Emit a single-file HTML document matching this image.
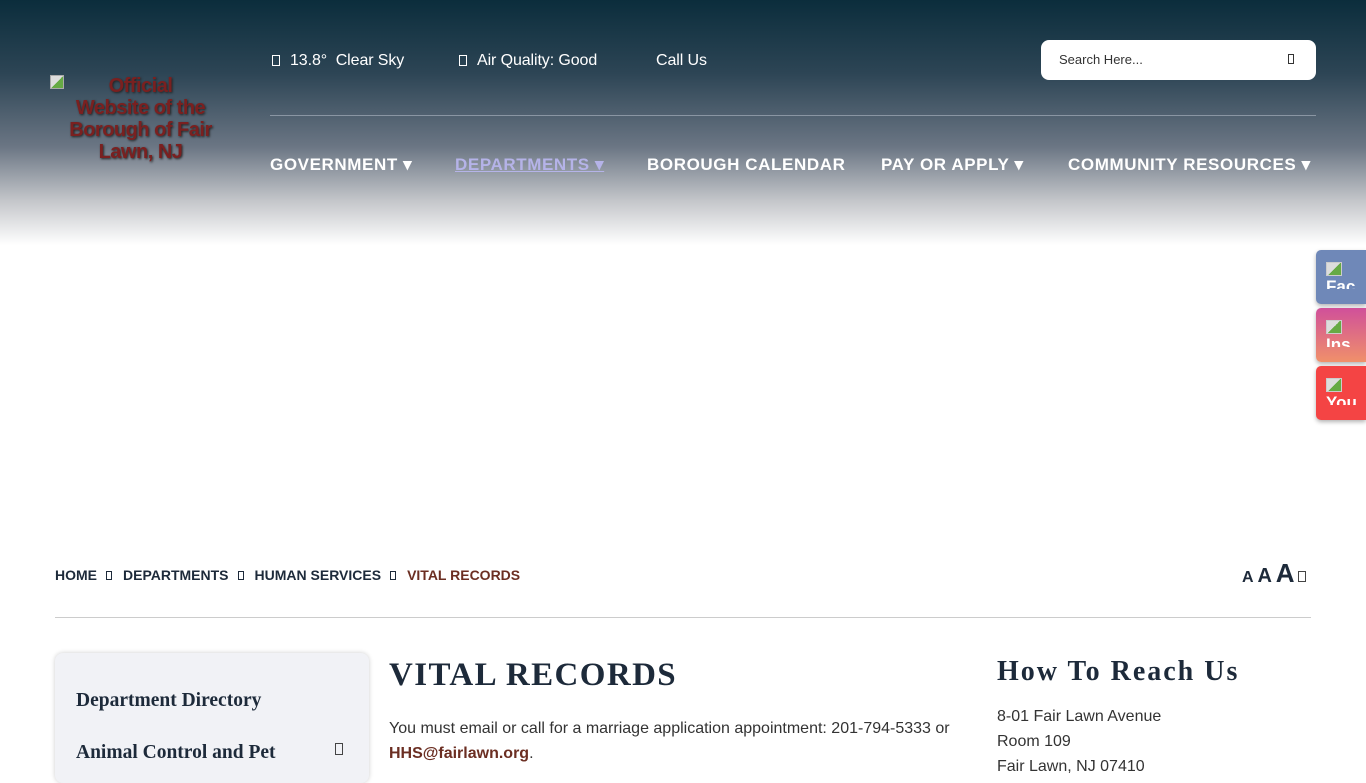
<!DOCTYPE html>
<html><head><meta charset="utf-8"><style>
*{margin:0;padding:0;box-sizing:border-box}
body{width:1366px;height:768px;overflow:hidden;background:#fff;font-family:"Liberation Sans",sans-serif;position:relative}
.hdr{position:absolute;left:0;top:0;width:1366px;height:245px;background:linear-gradient(180deg,#0b2d3c 0%,#2d4555 30%,#6b7684 60%,#c4c6ca 82%,#fff 100%)}
.logo{position:absolute;left:58px;top:75px;width:165px;text-align:center;color:#7a2020;font-weight:bold;font-size:20px;line-height:22px;text-shadow:1px 1px 2px #222;letter-spacing:-.5px}
.bimg{position:absolute;left:50px;top:75px;width:14px;height:14px;border:1px solid #aaa;background:linear-gradient(135deg,#ddd 50%,#6a4 50%)}
.top{position:absolute;top:52px;color:#fff;font-size:16px;letter-spacing:-.1px}
.sq{display:inline-block;width:8px;height:11px;border:1px solid #fff;margin-right:10px;vertical-align:-1px}
.line{position:absolute;left:270px;top:115px;width:1046px;height:1px;background:#8a96a3}
.nav{position:absolute;top:155px;color:#fff;font-weight:bold;font-size:17px;letter-spacing:.6px}
.search{position:absolute;left:1041px;top:40px;width:275px;height:40px;background:#fff;border-radius:8px;font-size:13px;color:#333;padding:12px 18px}
.soc{position:absolute;left:1316px;width:50px;height:54px;border-radius:5px 0 0 5px;box-shadow:0 2px 4px rgba(0,0,0,.3);color:#fff;font-weight:bold;font-size:17px;padding:12px 10px;overflow:hidden;line-height:18px;white-space:nowrap}
.soc i{display:block;width:16px;height:14px;border:1px solid #ccc;background:linear-gradient(135deg,#ddd 50%,#6a4 50%);margin-bottom:2px}
.soc span{display:block;height:11px;overflow:hidden}
.bc{position:absolute;top:567px;font-size:14px;font-weight:bold;color:#1d2a3a}
.hr{position:absolute;left:55px;top:617px;width:1256px;height:1px;background:#ccc}
.side{position:absolute;left:55px;top:653px;width:314px;height:130px;background:#f1f2f6;border-radius:8px;box-shadow:0 0 5px rgba(0,0,0,.2)}
.serif{font-family:"Liberation Serif",serif;font-weight:bold;color:#1d2a3a}
.bs{display:inline-block;width:6px;height:9px;border:1px solid #1d2a3a;margin:0 11px 0 9px;vertical-align:0}
</style></head><body>
<div class="hdr"></div>
<div class="bimg"></div>
<div class="logo">Official<br>Website of the<br>Borough of Fair<br>Lawn, NJ</div>
<div class="top" style="left:272px"><span class="sq"></span>13.8°&nbsp; Clear Sky</div>
<div class="top" style="left:459px"><span class="sq"></span>Air Quality: Good</div>
<div class="top" style="left:656px">Call Us</div>
<div class="search">Search Here...<span style="position:absolute;right:22px;top:14px;width:6px;height:10px;border:1px solid #333"></span></div>
<div class="line"></div>
<div class="nav" style="left:270px">GOVERNMENT ▾</div>
<div class="nav" style="left:455px;color:#b5b3e8;text-decoration:underline">DEPARTMENTS ▾</div>
<div class="nav" style="left:647px;letter-spacing:.6px">BOROUGH CALENDAR</div>
<div class="nav" style="left:881px">PAY OR APPLY ▾</div>
<div class="nav" style="left:1068px">COMMUNITY RESOURCES ▾</div>
<div class="soc" style="top:250px;background:#6f88b8"><i></i><span>Fac</span></div>
<div class="soc" style="top:308px;background:linear-gradient(180deg,#d0509a,#f0906a)"><i></i><span>Ins</span></div>
<div class="soc" style="top:366px;background:#f44444"><i></i><span>You</span></div>
<div class="bc" style="left:55px">HOME<span class="bs"></span>DEPARTMENTS<span class="bs"></span>HUMAN SERVICES<span class="bs"></span><span style="color:#6b2e22">VITAL RECORDS</span></div>
<div class="bc" style="left:1242px;top:558px"><span style="font-size:16px">A</span> <span style="font-size:20px">A</span> <span style="font-size:26px">A</span> <span style="display:inline-block;width:8px;height:11px;border:1px solid #444"></span></div>
<div class="hr"></div>
<div class="side">
<div class="serif" style="position:absolute;left:21px;top:37px;font-size:19.5px">Department Directory</div>
<div class="serif" style="position:absolute;left:21px;top:89px;font-size:19.5px">Animal Control and Pet</div>
<div style="position:absolute;left:280px;top:90px;width:8px;height:12px;border:1px solid #444"></div>
</div>
<div class="serif" style="position:absolute;left:389px;top:657px;font-size:33px;letter-spacing:1.4px">VITAL RECORDS</div>
<div style="position:absolute;left:389px;top:716px;font-size:16px;color:#333;line-height:25px">You must email or call for a marriage application appointment: 201-794-5333 or<br><b style="color:#6b2e22">HHS@fairlawn.org</b>.</div>
<div class="serif" style="position:absolute;left:997px;top:656px;font-size:28px;letter-spacing:2px">How To Reach Us</div>
<div style="position:absolute;left:997px;top:704px;font-size:16px;color:#333;line-height:25px">8-01 Fair Lawn Avenue<br>Room 109<br>Fair Lawn, NJ 07410</div>
</body></html>
